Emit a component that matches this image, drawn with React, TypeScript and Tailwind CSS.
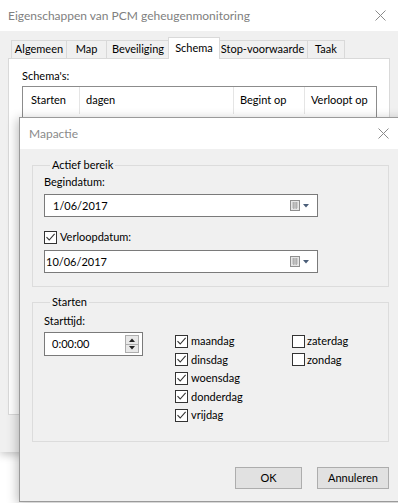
import React from "react";

const FONT = { fontFamily: 'Lato, "Noto Sans", sans-serif' };

function CloseX({ className = "" }: { className?: string }) {
  return (
    <svg width="11" height="11" viewBox="0 0 11 11" className={className}>
      <path d="M0.5 0.5 L10.5 10.5 M10.5 0.5 L0.5 10.5" stroke="#8a8a8a" strokeWidth="1" fill="none" />
    </svg>
  );
}

function Check({ checked }: { checked: boolean }) {
  return (
    <span className="flex h-[13px] w-[13px] shrink-0 items-center justify-center border border-[#333] bg-white">
      {checked && (
        <svg width="11" height="11" viewBox="0 0 11 11">
          <path d="M1.5 5.2 L4.2 8 L9.6 1.8" fill="none" stroke="#333" strokeWidth="1.1" />
        </svg>
      )}
    </span>
  );
}

function CalendarDrop() {
  return (
    <span className="flex items-center gap-[3px]">
      <svg width="10" height="11" viewBox="0 0 10 11">
        <rect x="0.5" y="0.5" width="9" height="10" fill="#e6e6e6" stroke="#8f8f8f" />
        <path d="M2 3 H8 M2 5 H8 M2 7 H8 M3.5 2 V9 M5 2 V9 M6.5 2 V9" stroke="#a8a8a8" strokeWidth="0.8" />
      </svg>
      <svg width="6" height="4" viewBox="0 0 6 4">
        <path d="M0 0 H6 L3 3.5 Z" fill="#4a5d78" />
      </svg>
    </span>
  );
}

function DateField({ value, pad }: { value: string; pad: string }) {
  return (
    <div className={`flex h-[23px] w-[274px] items-center border border-[#7a7a7a] bg-white pr-[8px] ${pad}`}>
      <span className="flex-1 leading-none">{value}</span>
      <CalendarDrop />
    </div>
  );
}

const tabs = [
  { label: "Algemeen", w: "w-[56px]" },
  { label: "Map", w: "w-[41px]" },
  { label: "Beveiliging", w: "w-[64px]" },
  { label: "Schema", w: "w-[52px]", active: true },
  { label: "Stop-voorwaarde", w: "w-[91px]" },
  { label: "Taak", w: "w-[38px]" },
];

const daysLeft = ["maandag", "dinsdag", "woensdag", "donderdag", "vrijdag"];
const daysRight = ["zaterdag", "zondag"];

export default function App() {
  return (
    <div className="relative h-[503px] w-[398px] overflow-hidden whitespace-nowrap bg-white text-[11px] text-black" style={FONT}>
      {/* achterliggend eigenschappenvenster */}
      <div className="h-[452px] bg-[#f0f0f0] shadow-[0_3px_8px_rgba(0,0,0,0.22)]">
        <div className="flex h-[31px] items-center justify-between bg-white pl-[8px] pr-[12px] text-[12px] text-[#808080]">
          <span>Eigenschappen van PCM geheugenmonitoring</span>
          <CloseX />
        </div>
        <div className="flex h-[27px] items-end pl-[11px]">
          {tabs.map((t) =>
            t.active ? (
              <div
                key={t.label}
                className={`relative z-10 -mx-[2px] -mb-px flex h-[22px] items-center justify-center border border-b-0 border-[#d9d9d9] bg-white ${t.w}`}
              >
                {t.label}
              </div>
            ) : (
              <div
                key={t.label}
                className={`-ml-px flex h-[18px] items-center justify-center border border-b-0 border-[#d9d9d9] bg-[#f0f0f0] first:ml-0 ${t.w}`}
              >
                {t.label}
              </div>
            )
          )}
        </div>
        <div className="mx-[8px] h-[357px] border border-[#d9d9d9] bg-white pl-[13px] pr-[12px] pt-[9px]">
          <div className="leading-[16px]">Schema's:</div>
          <div className="mt-[2px] h-[300px] border border-[#8c8c8c] bg-white">
            <div className="flex h-[27px] items-center">
              <div className="flex h-full w-[57px] items-center border-r border-[#e5e5e5] pl-[8px]">Starten</div>
              <div className="flex h-full w-[154px] items-center border-r border-[#e5e5e5] pl-[6px]">dagen</div>
              <div className="flex h-full w-[71px] items-center border-r border-[#e5e5e5] pl-[6px]">Begint op</div>
              <div className="flex h-full flex-1 items-center pl-[6px]">Verloopt op</div>
            </div>
          </div>
        </div>
      </div>

      {/* dialoogvenster Mapactie */}
      <div className="absolute left-[19px] top-[117px] h-[385px] w-[392px] border border-[#9a9a9a] bg-[#f0f0f0] shadow-[-2px_2px_10px_rgba(0,0,0,0.25)]">
        <div className="flex h-[31px] items-center justify-between bg-white pl-[9px] pr-[21px] text-[12px] text-[#8a8a8a]">
          <span>Mapactie</span>
          <CloseX />
        </div>

        <div className="pl-[12px]">
          <fieldset className="mt-[8px] w-[357px] border border-[#dcdcdc] pb-[13px] pl-[11px]">
            <legend className="ml-[6px] px-[2px] leading-[16px]">Actief bereik</legend>
            <div className="mt-[1px] leading-[16px]">Begindatum:</div>
            <div className="mt-[4px]">
              <DateField value="1/06/2017" pad="pl-[8px]" />
            </div>
            <label className="mt-[12px] flex h-[17px] items-center gap-[3px]">
              <Check checked />
              <span>Verloopdatum:</span>
            </label>
            <div className="mt-[4px]">
              <DateField value="10/06/2017" pad="pl-[1px]" />
            </div>
          </fieldset>

          <fieldset className="mt-[7px] h-[148px] w-[357px] border border-[#dcdcdc] pl-[11px]">
            <legend className="ml-[6px] px-[2px] leading-[16px]">Starten</legend>
            <div className="mt-[3px] leading-[16px]">Starttijd:</div>
            <div className="mt-[3px] flex items-start">
              <div className="flex h-[24px] w-[99px] items-center border border-[#7a7a7a] bg-white pl-[7px] pr-[3px]">
                <span className="flex-1">0:00:00</span>
                <span className="flex h-[18px] w-[14px] flex-col border border-[#adadad] bg-[#e8e8e8]">
                  <span className="flex flex-1 items-center justify-center border-b border-[#adadad]">
                    <svg width="6" height="4" viewBox="0 0 6 4"><path d="M0 4 H6 L3 0.5 Z" fill="#222" /></svg>
                  </span>
                  <span className="flex flex-1 items-center justify-center">
                    <svg width="6" height="4" viewBox="0 0 6 4"><path d="M0 0 H6 L3 3.5 Z" fill="#222" /></svg>
                  </span>
                </span>
              </div>
              <div className="ml-[32px] w-[117px]">
                {daysLeft.map((d) => (
                  <label key={d} className="flex h-[18.5px] items-center gap-[3px]">
                    <Check checked />
                    <span>{d}</span>
                  </label>
                ))}
              </div>
              <div>
                {daysRight.map((d) => (
                  <label key={d} className="flex h-[18.5px] items-center gap-[2px]">
                    <Check checked={false} />
                    <span>{d}</span>
                  </label>
                ))}
              </div>
            </div>
          </fieldset>

          <div className="mt-[25px] flex w-[357px] justify-end gap-[15px]">
            <button className="h-[22px] w-[67px] border border-[#adadad] bg-[#e1e1e1]">OK</button>
            <button className="h-[22px] w-[72px] border border-[#adadad] bg-[#e1e1e1]">Annuleren</button>
          </div>
        </div>
      </div>
    </div>
  );
}
